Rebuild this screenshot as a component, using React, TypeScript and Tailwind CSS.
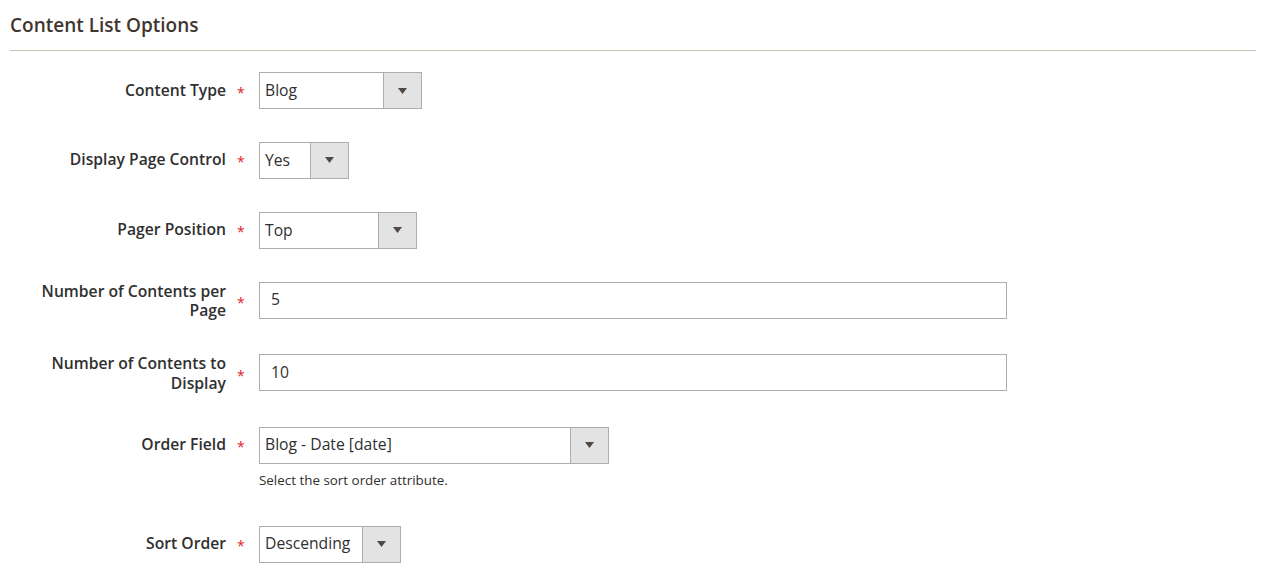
import React from "react";

type Field =
  | { kind: "select"; label: string[]; value: string; width: string; note?: string }
  | { kind: "input"; label: string[]; value: string };

const fields: Field[] = [
  { kind: "select", label: ["Content Type"], value: "Blog", width: "w-[163px]" },
  { kind: "select", label: ["Display Page Control"], value: "Yes", width: "w-[90px]" },
  { kind: "select", label: ["Pager Position"], value: "Top", width: "w-[158px]" },
  { kind: "input", label: ["Number of Contents per", "Page"], value: "5" },
  { kind: "input", label: ["Number of Contents to", "Display"], value: "10" },
  {
    kind: "select",
    label: ["Order Field"],
    value: "Blog - Date [date]",
    width: "w-[350px]",
    note: "Select the sort order attribute.",
  },
  { kind: "select", label: ["Sort Order"], value: "Descending", width: "w-[142px]" },
];

const SelectBox = ({ value, width }: { value: string; width: string }) => (
  <div className={`flex h-[37px] border border-[#adadad] bg-white ${width}`}>
    <div className="flex-1 pl-[5px] flex items-center text-[15.7px] text-[#303030] whitespace-nowrap overflow-hidden">
      {value}
    </div>
    <div className="w-[38px] border-l border-[#adadad] bg-[#e3e3e3] flex items-center justify-center">
      <svg width="9" height="6" viewBox="0 0 9 6">
        <path d="M0 0 H9 L4.5 6 Z" fill="#514943" />
      </svg>
    </div>
  </div>
);

const TextBox = ({ value }: { value: string }) => (
  <div className="h-[37px] w-[748px] border border-[#adadad] bg-white pl-[11px] flex items-center text-[15.7px] text-[#303030]">
    {value}
  </div>
);

export default function App() {
  return (
    <div
      className="bg-white min-h-screen px-[10px] pt-[12px]"
      style={{ fontFamily: '"Open Sans", "Liberation Sans", sans-serif' }}
    >
      <h2 className="text-[19px] leading-[27px] font-semibold text-[#41362f]">Content List Options</h2>
      <div className="mt-[11px] h-px w-[1246px] bg-[#cac3b4]" />

      <div className="mt-[21px] -ml-[10px]">
        {fields.map((f, i) => (
          <div key={i} className="flex items-start mb-[32.9px]">
            <div className="flex items-center min-h-[37px]">
              <div className="w-[226px] text-right text-[15.7px] leading-[19.8px] font-semibold text-[#303030]">
                {f.label.map((l, j) => (
                  <div key={j}>{l}</div>
                ))}
              </div>
              <div className="w-[33px] pl-[11px] text-[#e22626] text-[14px] leading-none translate-y-[1.5px]">*</div>
            </div>
            <div className="flex flex-col">
              {f.kind === "select" ? <SelectBox value={f.value} width={f.width} /> : <TextBox value={f.value} />}
              {f.kind === "select" && f.note && (
                <div className="mt-[7px] pb-[4px] text-[13.4px] leading-[18px] text-[#303030]">{f.note}</div>
              )}
            </div>
          </div>
        ))}
      </div>
    </div>
  );
}
